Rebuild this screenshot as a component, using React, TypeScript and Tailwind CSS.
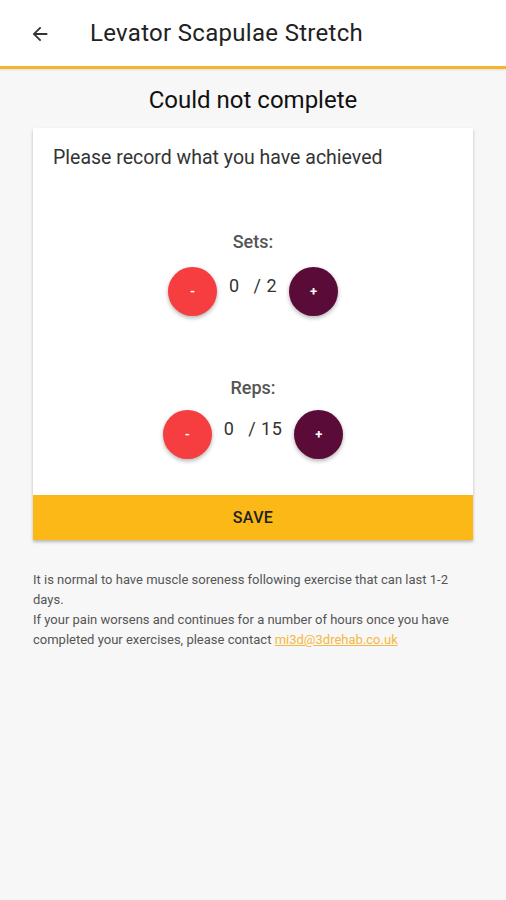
import React from "react";

function BackArrow() {
  return (
    <svg width="22" height="22" viewBox="0 0 24 24" className="text-[#333]">
      <path fill="currentColor" d="M20 11H7.83l5.59-5.59L12 4l-8 8 8 8 1.41-1.41L7.83 13H20v-2z" />
    </svg>
  );
}

function RoundButton({ label, color }: { label: string; color: string }) {
  return (
    <button
      className={`w-[49px] h-[49px] rounded-full ${color} text-white text-[13px] font-bold flex items-center justify-center shadow-[0_2px_4px_rgba(0,0,0,0.3)]`}
    >
      {label}
    </button>
  );
}

function Counter({ title, total, top }: { title: string; total: number; top: string }) {
  return (
    <div className="flex flex-col items-center">
      <div className="text-[18px] font-medium text-[#555] leading-[20px]">{title}</div>
      <div className={`${top} flex items-center gap-[12px]`}>
        <RoundButton label="-" color="bg-[#f63d3f]" />
        <div className="text-[18px] text-[#333] -mt-[12px] tracking-wide">
          <span className="mr-[14px]">0</span>/ {total}
        </div>
        <RoundButton label="+" color="bg-[#5a0b38]" />
      </div>
    </div>
  );
}

export default function App() {
  return (
    <div className="min-h-[900px] bg-[#f7f7f7] font-['Roboto',sans-serif]">
      <header className="h-[69px] bg-white border-b-[3px] border-[#f6b42a] flex items-center shadow-[0_1px_2px_rgba(0,0,0,0.1)]">
        <div className="pl-[29px] pt-[1px]">
          <BackArrow />
        </div>
        <h1 className="ml-[39px] text-[24px] text-[#222] tracking-[0.3px]">Levator Scapulae Stretch</h1>
      </header>

      <h2 className="mt-[16px] text-center text-[24px] text-[#111] leading-[30px]">Could not complete</h2>

      <div className="mx-[33px] mt-[13px] bg-white shadow-[0_2px_3px_rgba(0,0,0,0.25)]">
        <p className="px-[20px] pt-[17px] text-[19.5px] text-[#333] leading-[26px]">
          Please record what you have achieved
        </p>
        <div className="pt-[61px]">
          <Counter title="Sets:" total={2} top="mt-[15px]" />
        </div>
        <div className="pt-[62px] pb-[36px]">
          <Counter title="Reps:" total={15} top="mt-[12px]" />
        </div>
        <button className="w-full h-[45px] bg-[#fbb817] text-[16px] font-medium text-[#222] tracking-wide">
          SAVE
        </button>
      </div>

      <div className="mx-[33px] mt-[30px] text-[13px] leading-[20px] text-[#555]">
        <p>It is normal to have muscle soreness following exercise that can last 1-2 days.</p>
        <p>
          If your pain worsens and continues for a number of hours once you have completed your exercises, please contact{" "}
          <a className="text-[#f6b83e] underline" href="#">
            mi3d@3drehab.co.uk
          </a>
        </p>
      </div>
    </div>
  );
}
